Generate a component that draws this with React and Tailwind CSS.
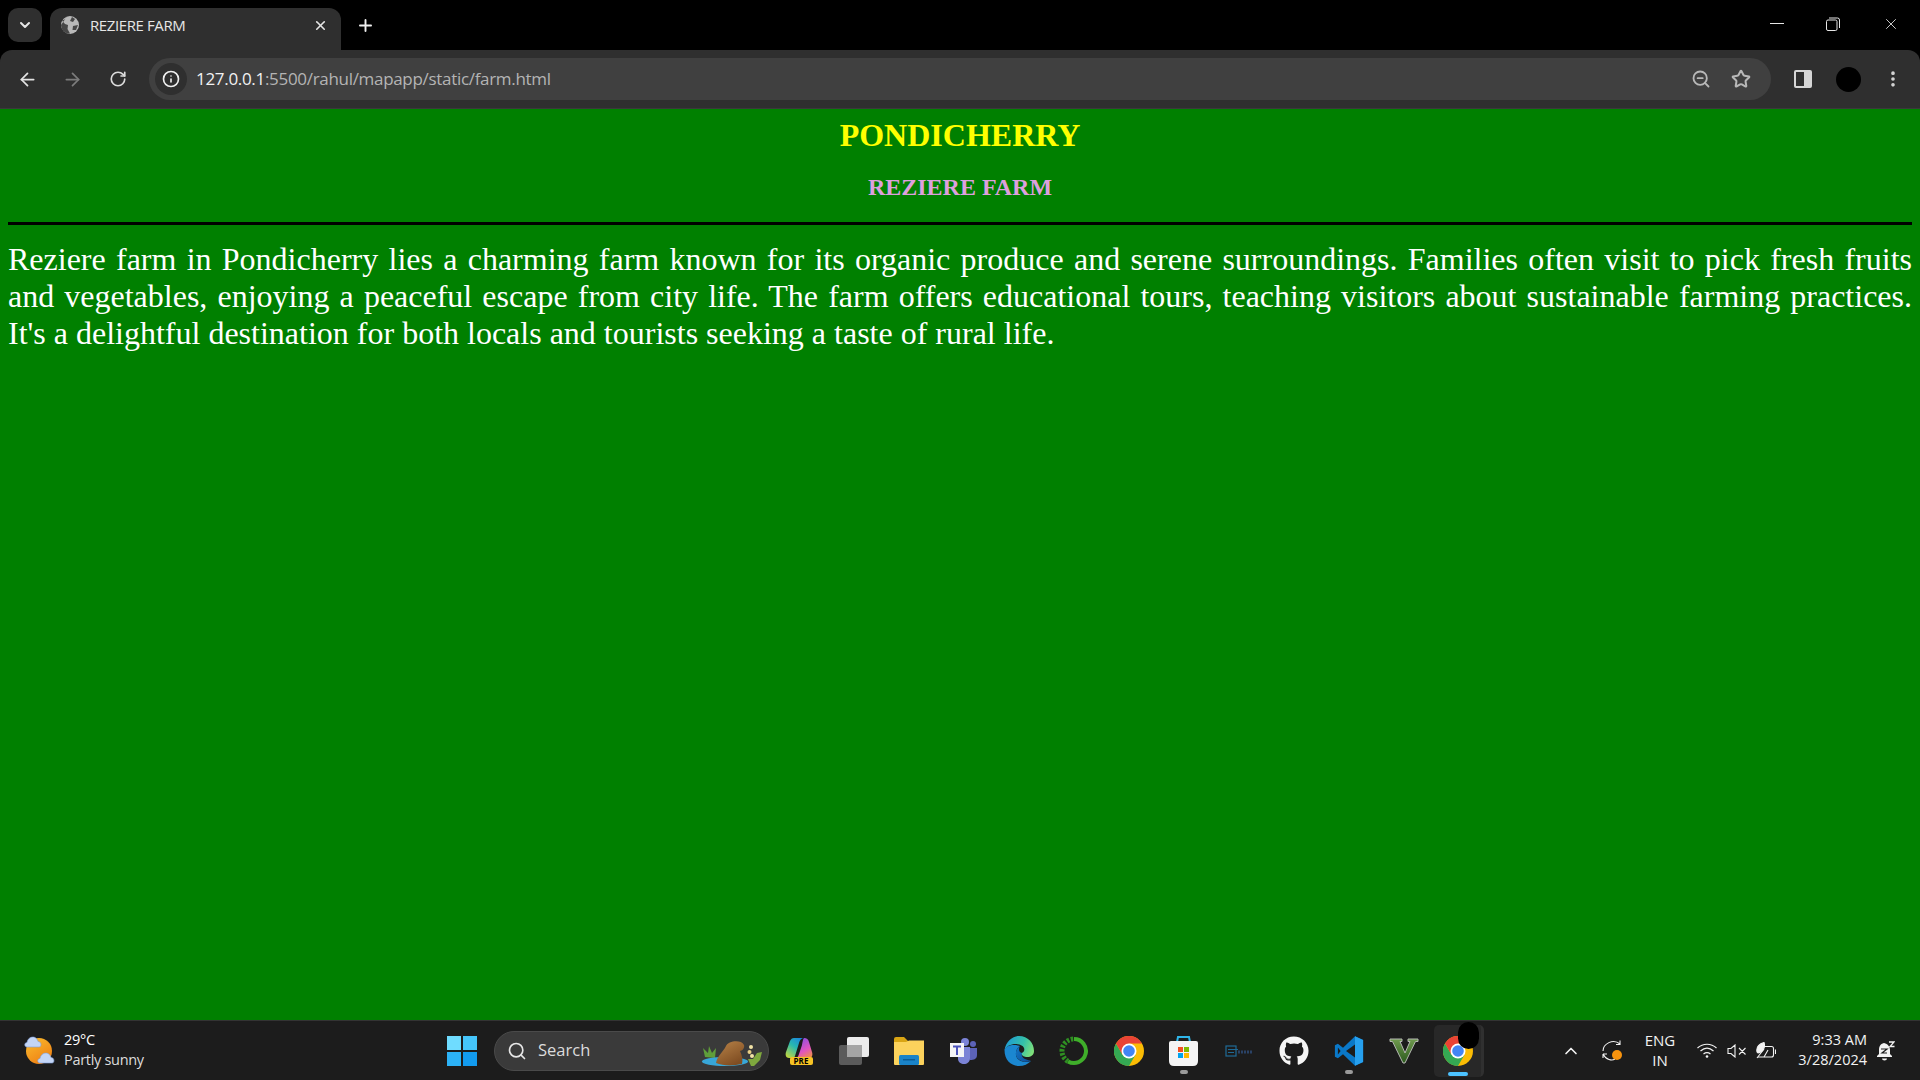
import React from "react";
import { ArrowLeft, ArrowRight, ChevronDown, ChevronUp, Info, MoreVertical, Plus, RotateCw, Search, Star, X, ZoomOut } from "lucide-react";
import { FaGithub } from "react-icons/fa";

const sans = "[font-family:'Open_Sans','Noto_Sans',sans-serif]";

const Globe = () => (
  <svg width="20" height="20" viewBox="0 0 20 20">
    <circle cx="10" cy="10" r="9" fill="#b9b9b9" />
    <path d="M7 1.5 C6 4 4 5 2 5.5 L5 9 L8 10 L7.5 14 L10 18.5 C8 19 4 18 2 14 L1 10 Z" fill="#333" opacity="0.85" />
    <path d="M12 2 L15 4 L13 7 L10 6 Z M13 11 L18 10 L16 15 L12.5 15 Z" fill="#333" opacity="0.85" />
  </svg>
);

const RestoreIcon = () => (
  <svg width="14" height="14" viewBox="0 0 14 14" fill="none" stroke="#e6e6e6" strokeWidth="1">
    <rect x="0.5" y="3" width="10.5" height="10.5" rx="1.5" />
    <path d="M3 1 H11.5 Q13.5 1 13.5 3 V11" />
  </svg>
);

const SidePanel = () => (
  <svg width="18" height="18" viewBox="0 0 18 18">
    <rect x="0" y="0" width="18" height="18" rx="2" fill="#d6d6d6" />
    <rect x="2" y="2" width="8" height="14" fill="#2f2f2f" />
  </svg>
);

const Cloud = ({ x, y }) => (
  <g transform={`translate(${x} ${y})`}>
    <path d="M3 11 C0 11 0 6.5 3 6.5 C3.5 3 6 1 9 1 C12 1 13.5 3.5 14 5.5 C17.5 5.5 18 11 15 11 Z" fill="#c3d5f6" stroke="#7f9fd8" strokeWidth="0.6" />
  </g>
);

const WeatherIcon = () => (
  <svg width="32" height="30" viewBox="0 0 32 30">
    <defs>
      <linearGradient id="sun" x1="0.2" y1="0" x2="0.8" y2="1">
        <stop offset="0" stopColor="#f9b92c" />
        <stop offset="1" stopColor="#ee7c12" />
      </linearGradient>
    </defs>
    <circle cx="15" cy="15" r="13" fill="url(#sun)" />
    <Cloud x={0} y={0} />
    <Cloud x={13} y={16} />
  </svg>
);

const WinLogo = () => (
  <svg width="30" height="30" viewBox="0 0 30 30">
    <rect x="0" y="0" width="14" height="14" fill="#6fdcff" />
    <rect x="16" y="0" width="14" height="14" fill="#45c6fb" />
    <rect x="0" y="16" width="14" height="14" fill="#2cb2f6" />
    <rect x="16" y="16" width="14" height="14" fill="#129bef" />
  </svg>
);

const Capybara = () => (
  <svg width="64" height="36" viewBox="0 0 64 36">
    <defs>
      <linearGradient id="capy" x1="0" y1="0" x2="0.6" y2="1">
        <stop offset="0" stopColor="#b98449" />
        <stop offset="1" stopColor="#7f4d22" />
      </linearGradient>
    </defs>
    <path d="M4 24 L2 15 L7 20 L8 13 L11 20 L15 15 L14 25 Z" fill="#5f9e3a" />
    <ellipse cx="24" cy="28.5" rx="23" ry="4.5" fill="#38a6d8" />
    <path d="M15 30 C16 23 22 19 25 13 C27 8 40 6 43 12 C44 15 41 18 39 18 C41 22 42 27 41 31 C32 33 22 33 15 30 Z" fill="url(#capy)" />
    <path d="M50 33 L47 26 H52 L56 20 L61 19 L59 27 L53 33 Z" fill="#7fa83e" />
    <circle cx="50" cy="14" r="2" fill="#f2e3a6" />
    <circle cx="48.5" cy="19" r="2" fill="#e9cf86" />
    <circle cx="51" cy="23" r="2" fill="#f2e3a6" />
  </svg>
);

const Copilot = () => (
  <div className="relative w-[28px] h-[28px]">
    <svg width="28" height="22" viewBox="0 0 28 22" className="block">
      <defs>
        <linearGradient id="cpL" x1="0.8" y1="0" x2="0.1" y2="1">
          <stop offset="0" stopColor="#1a84e0" />
          <stop offset="0.45" stopColor="#28b8b0" />
          <stop offset="1" stopColor="#c8d83a" />
        </linearGradient>
        <linearGradient id="cpR" x1="0.3" y1="0" x2="0.8" y2="1">
          <stop offset="0" stopColor="#8a4fe0" />
          <stop offset="0.6" stopColor="#e054c0" />
          <stop offset="1" stopColor="#f09048" />
        </linearGradient>
      </defs>
      <path d="M9 1 H20 C16 1 15 3 14 6 L10 19 C9.5 21 8 21 6 21 H4 C1 21 0 18 1 15 L5 4 C6 2 7 1 9 1 Z" fill="url(#cpL)" />
      <path d="M19 1 C22 1 23 2 24 5 L27 15 C28 18 27 21 24 21 H10 C12 21 13 20 14 17 L17 8 C17.5 5 18 2 19 1 Z" fill="url(#cpR)" />
    </svg>
    <span className={`absolute left-[5px] top-[20px] w-[23px] h-[8px] rounded-[2px] bg-[#f7c325] text-[8px] leading-[8px] font-bold text-black text-center ${sans}`}>PRE</span>
  </div>
);

const TaskView = () => (
  <svg width="30" height="28" viewBox="0 0 30 28">
    <rect x="0" y="8" width="23" height="20" rx="2" fill="#5b5b5b" />
    <rect x="8" y="0" width="22" height="20" rx="2" fill="#ececec" />
    <rect x="8" y="8" width="15" height="12" fill="#a5a5a5" />
  </svg>
);

const Folder = () => (
  <svg width="30" height="28" viewBox="0 0 30 28">
    <path d="M0 2 Q0 0 2 0 H10 L14 4 H30 V8 H0 Z" fill="#d9a514" />
    <path d="M0 5 L12 5 L15 3.5 H30 V27 Q30 28 29 28 H1 Q0 28 0 27 Z" fill="#fbd25c" />
    <rect x="5" y="18" width="20" height="10" rx="1.5" fill="#1a83c8" />
    <rect x="9" y="22" width="12" height="1.5" fill="#0b5c96" />
  </svg>
);

const Teams = () => (
  <svg width="28" height="26" viewBox="0 0 28 26">
    <circle cx="15" cy="4" r="4" fill="#7b83d6" />
    <circle cx="23" cy="6" r="3" fill="#5c63b8" />
    <path d="M10 9 H20 V20 C20 24 17 26 14 26 C11 26 8 24 8 21 V18 Z" fill="#7b83d6" />
    <path d="M20 10 H27 V17 C27 21 24 22 20 22 Z" fill="#5c63b8" />
    <rect x="0" y="5" width="14" height="14" fill="#f4f4f6" />
    <path d="M3 7.5 H11 V9.5 H8 V17 H6 V9.5 H3 Z" fill="#4b53bc" />
  </svg>
);

const Edge = () => (
  <svg width="30" height="30" viewBox="0 0 30 30">
    <defs>
      <linearGradient id="edgeTop" x1="0" y1="0.3" x2="1" y2="0.6">
        <stop offset="0" stopColor="#1d9ad6" />
        <stop offset="0.6" stopColor="#35c1a8" />
        <stop offset="1" stopColor="#7fe07a" />
      </linearGradient>
      <linearGradient id="edgeLow" x1="0" y1="0" x2="1" y2="1">
        <stop offset="0" stopColor="#1276c4" />
        <stop offset="1" stopColor="#0e4f9c" />
      </linearGradient>
    </defs>
    <path d="M0.5 14 C0.5 24 7 30 15 30 C20 30 24 28 27 25 C22 27 13 26 12 19 C11.5 14 14 11 16 10 C10 8 2 9 0.5 14 Z" fill="#1b87d0" />
    <path d="M16 10 C13 12 11.5 15 12 19 C13 25 21 27 27 25 C24 24 19 23 18 20 C17.5 18.5 18 17.5 19 17 C15 17 14 13 16 10 Z" fill="url(#edgeLow)" />
    <path d="M0.5 14 C2 5 9 0 15 0 C24 0 30 7 30 15 C30 19 27 21 23 21 C20 21 17 19.5 18 17 C21 15.5 21 12 18.5 10 C13 6 3 8 0.5 14 Z" fill="url(#edgeTop)" />
  </svg>
);

const RingApp = () => (
  <svg width="30" height="30" viewBox="0 0 30 30" fill="none">
    <path d="M15 3 A12 12 0 1 1 9 25.4" stroke="#3fae2a" strokeWidth="4" />
    <path d="M9 25.4 A12 12 0 0 1 15 3" stroke="#2f8f22" strokeWidth="5" strokeDasharray="2.5 1.5" />
  </svg>
);

const Chrome = () => (
  <svg width="30" height="30" viewBox="0 0 30 30">
    <circle cx="15" cy="15" r="15" fill="#fbbc04" />
    <path d="M2 7.5 A15 15 0 0 0 15 30 L21.5 18.75 H8.5 Z" fill="#34a853" />
    <path d="M2 7.5 A15 15 0 0 1 28 7.5 H15 L8.5 18.75 Z" fill="#ea4335" />
    <circle cx="15" cy="15" r="7.5" fill="#fff" />
    <circle cx="15" cy="15" r="5.8" fill="#4285f4" />
  </svg>
);

const Store = () => (
  <svg width="29" height="30" viewBox="0 0 29 30">
    <path d="M8 6 L9 1 H20 L21 6" fill="none" stroke="#2fb6ea" strokeWidth="2" />
    <path d="M2 5 H27 Q29 5 29 7 V25 Q29 30 24 30 H5 Q0 30 0 25 V7 Q0 5 2 5 Z" fill="#f4f4f4" />
    <rect x="9" y="11" width="5" height="5" fill="#f25022" />
    <rect x="15" y="11" width="5" height="5" fill="#7fba00" />
    <rect x="9" y="17" width="5" height="5" fill="#00a4ef" />
    <rect x="15" y="17" width="5" height="5" fill="#ffb900" />
  </svg>
);

const SmallApp = () => (
  <svg width="28" height="12" viewBox="0 0 28 12" fill="none">
    <rect x="1" y="1" width="10" height="10" stroke="#1f6a96" strokeWidth="1.2" />
    <path d="M3 4.5 H13 M3 7.5 H9" stroke="#1f6a96" strokeWidth="1" />
    <path d="M13 7 H27" stroke="#2a4266" strokeWidth="3" strokeDasharray="2 1" />
  </svg>
);

const VsCode = () => (
  <svg width="30" height="30" viewBox="0 0 100 100">
    <path fillRule="evenodd" d="M70 1 L30 39 L13 26 L3 31 V69 L13 74 L30 61 L70 99 L97 87 V13 Z M70 28 L40 50 L70 72 Z M13 38 L22 50 L13 62 Z" fill="#0a78c8" />
    <path fillRule="evenodd" d="M70 1 L97 13 V87 L70 99 Z" fill="#26a0ef" />
  </svg>
);

const GtaV = () => (
  <svg width="30" height="26" viewBox="0 0 30 26">
    <defs>
      <linearGradient id="gtaV" x1="0" y1="0" x2="0" y2="1">
        <stop offset="0" stopColor="#6f9a4e" />
        <stop offset="1" stopColor="#2c5a1e" />
      </linearGradient>
    </defs>
    <path d="M1 1 H13 V3.5 H11 L16 15 L21 3.5 H19 V1 H29 V3.5 H26.5 L16 25 H14 L3.5 3.5 H1 Z" fill="url(#gtaV)" stroke="#b5b8b2" strokeWidth="1" />
  </svg>
);

const Wifi = () => (
  <svg width="20" height="15" viewBox="0 0 20 15" fill="none" stroke="#f2f2f2" strokeWidth="1.2">
    <path d="M0.5 5 C6 0 14 0 19.5 5 M3.5 8 C7.5 4.5 12.5 4.5 16.5 8 M6.5 11 C8.5 9.5 11.5 9.5 13.5 11" />
    <circle cx="10" cy="13.5" r="1.3" fill="#f2f2f2" stroke="none" />
  </svg>
);

const Volume = () => (
  <svg width="20" height="14" viewBox="0 0 20 14" fill="none" stroke="#f2f2f2" strokeWidth="1.1">
    <path d="M1 4.5 H4 L8 1 V13 L4 9.5 H1 Z M12 4 L18.5 10.5 M18.5 4 L12 10.5" />
  </svg>
);

const Battery = () => (
  <svg width="20" height="17" viewBox="0 0 20 17" fill="none" stroke="#f2f2f2" strokeWidth="1.1">
    <path d="M8 4.5 H15.5 Q17.5 4.5 17.5 6.5 V13 Q17.5 15 15.5 15 H2" />
    <path d="M19.5 7.5 V12" />
    <path d="M1 10 C0 5 3 2 8 0.5 C9.5 5 7.5 10 2 11 Z" fill="#f2f2f2" />
    <path d="M1 16 L8 7 M8 15 L12 8" />
  </svg>
);

const SyncDot = () => (
  <div className="relative w-[20px] h-[21px]">
    <svg width="20" height="21" viewBox="0 0 20 21" fill="none" stroke="#f2f2f2" strokeWidth="1.1">
      <path d="M1 11 C1 4 11 -2 18 4 M18 0.5 V4.5 H14 M1 14 H5 M1 14 V18 M1 14 C4 20 10 21 13 19" />
    </svg>
    <span className="absolute right-0 bottom-[1px] w-[10px] h-[10px] rounded-full bg-[#f7930e]" />
  </div>
);

const SleepBell = () => (
  <svg width="18" height="20" viewBox="0 0 18 20">
    <path d="M7 2 C3 3 2 6 2 9 V13 L0 15 V16 H15 V15 L13 13 V9 C13 6 11 3 7 2 Z" fill="#f2f2f2" />
    <path d="M5 17.5 H10 A2.5 2 0 0 1 5 17.5 Z" fill="#f2f2f2" />
    <path d="M4 8 H10 L5 12 H10" fill="none" stroke="#1c1c1c" strokeWidth="1.2" />
    <path d="M12 1 H17 L13 5.5 H17.5" fill="none" stroke="#f2f2f2" strokeWidth="1.3" />
  </svg>
);

const taskIcons = [
  { id: "copilot", icon: <Copilot /> },
  { id: "taskview", icon: <TaskView /> },
  { id: "folder", icon: <Folder /> },
  { id: "teams", icon: <Teams /> },
  { id: "edge", icon: <Edge /> },
  { id: "ring", icon: <RingApp /> },
  { id: "chrome", icon: <Chrome /> },
  { id: "store", icon: <Store />, dot: true },
  { id: "app", icon: <SmallApp /> },
  { id: "github", icon: <FaGithub size={30} color="#f5f5f5" /> },
  { id: "vscode", icon: <VsCode />, dot: true },
  { id: "gta", icon: <GtaV /> },
];

const TaskIcon = ({ icon, dot }) => (
  <div className="relative w-[55px] h-[59px] flex items-center justify-center">
    {icon}
    {dot && <span className="absolute bottom-[6px] left-[24px] w-[8px] h-[4px] rounded-full bg-[#9a9a9a]" />}
  </div>
);

export default function App() {
  return (
    <div className={`h-[1080px] w-[1920px] overflow-hidden flex flex-col bg-[#008000] ${sans}`}>
      {/* tab strip */}
      <div className="h-[50px] shrink-0 bg-black flex items-start pt-[8px] pl-[8px] text-[#e8e8e8]">
        <div className="w-[34px] h-[34px] rounded-[10px] bg-[#2f2f2f] flex items-center justify-center">
          <ChevronDown size={16} strokeWidth={3} color="#e6e6e6" />
        </div>
        <div className="ml-[8px] w-[291px] h-[42px] rounded-t-[12px] bg-[#2f2f2f] flex items-center pl-[10px] pr-[13px] pb-[8px]">
          <Globe />
          <span className="ml-[10px] text-[15px] text-[#e6e6e6] tracking-[-0.4px]">REZIERE FARM</span>
          <X size={15} strokeWidth={2.6} color="#e6e6e6" className="ml-auto" />
        </div>
        <div className="ml-[15px] h-[34px] flex items-center">
          <Plus size={19} strokeWidth={2.4} color="#f0f0f0" />
        </div>
        <div className="ml-auto flex items-center h-[32px] pr-[20px]">
          <svg width="14" height="2" viewBox="0 0 14 2"><rect width="14" height="1" fill="#e6e6e6" /></svg>
          <div className="ml-[42px]"><RestoreIcon /></div>
          <div className="ml-[42px]"><X size={18} strokeWidth={1.1} color="#f0f0f0" /></div>
        </div>
      </div>

      {/* toolbar */}
      <div className="h-[59px] shrink-0 bg-black">
        <div className="h-full rounded-t-[12px] bg-[#2f2f2f] flex items-center pl-[17px] pr-[17px] border-b border-[#3a3a3a]">
          <ArrowLeft size={21} strokeWidth={2} color="#e2e2e2" />
          <ArrowRight size={21} strokeWidth={2} color="#7c7c7c" className="ml-[24px]" />
          <RotateCw size={18} strokeWidth={2.2} color="#dcdcdc" className="ml-[26px]" />
          <div className="ml-[22px] flex-1 h-[42px] rounded-full bg-[#404040] flex items-center pl-[6px] pr-[20px]">
            <div className="w-[32px] h-[32px] rounded-full bg-[#2f2f2f] flex items-center justify-center">
              <Info size={18} strokeWidth={2.2} color="#f0f0f0" />
            </div>
            <span className="ml-[9px] text-[17px] tracking-[-0.31px] text-[#f2f2f2]">
              127.0.0.1<span className="text-[#b4b4b4]">:5500/rahul/mapapp/static/farm.html</span>
            </span>
            <ZoomOut size={20} strokeWidth={2.2} color="#b8b8b8" className="ml-auto" />
            <Star size={20} strokeWidth={2.4} color="#b8b8b8" className="ml-[20px]" />
          </div>
          <div className="ml-[23px]"><SidePanel /></div>
          <div className="ml-[24px] w-[25px] h-[25px] rounded-full bg-black" />
          <MoreVertical size={20} strokeWidth={2.4} color="#d6d6d6" className="ml-[22px]" />
        </div>
      </div>

      {/* page */}
      <main className="flex-1 bg-[#008000] px-[8px] pt-[8px] [font-family:'Liberation_Serif','Times_New_Roman',serif]">
        <h1 className="text-[32px] leading-[37px] font-bold text-center text-[#ffff00]">PONDICHERRY</h1>
        <h2 className="mt-[20px] text-[24px] leading-[27px] font-bold text-center text-[#dda0dd]">REZIERE FARM</h2>
        <div className="mt-[21px] h-[3px] bg-black" />
        <p className="mt-[16px] text-[32px] leading-[37px] text-white text-justify">
          Reziere farm in Pondicherry lies a charming farm known for its organic produce and serene surroundings. Families often visit to pick fresh fruits and vegetables, enjoying a peaceful escape from city life. The farm offers educational tours, teaching visitors about sustainable farming practices. It's a delightful destination for both locals and tourists seeking a taste of rural life.
        </p>
      </main>

      {/* taskbar */}
      <footer className="h-[60px] shrink-0 bg-[#1c1c1c] border-t border-[#333] flex items-center text-[#f2f2f2]">
        <div className="w-[447px] pl-[24px] flex items-center">
          <WeatherIcon />
          <div className="ml-[8px] text-[14.5px] leading-[20px] tracking-[-0.3px] pb-[2px]">
            <div className="text-white">29°C</div>
            <div className="text-[#dcdcdc]">Partly sunny</div>
          </div>
        </div>
        <WinLogo />
        <div className="ml-[17px] w-[275px] h-[40px] rounded-full bg-[#3a3a3a] border border-[#4a4a4a] flex items-center pl-[12px] pr-[3px]">
          <Search size={20} strokeWidth={2} color="#e6e6e6" />
          <span className="ml-[11px] text-[16.5px] text-[#dcdcdc]">Search</span>
          <div className="ml-auto"><Capybara /></div>
        </div>
        <div className="ml-[2px] flex items-center">
          {taskIcons.map((t) => (
            <TaskIcon key={t.id} icon={t.icon} dot={t.dot} />
          ))}
          <div className="relative ml-[3px] w-[50px] h-[52px] rounded-[5px] bg-[#282828] border-r-[3px] border-[#303030] flex items-center justify-center">
            <Chrome />
            <span className="absolute right-[2px] top-[-3px] w-[21px] h-[27px] rounded-full bg-black" />
            <span className="absolute bottom-[1px] left-[14px] w-[20px] h-[4px] rounded-full bg-[#4cc2ff]" />
          </div>
        </div>
        <ChevronUp size={20} strokeWidth={2} color="#f2f2f2" className="ml-[77px]" />
        <div className="ml-[21px]"><SyncDot /></div>
        <div className="ml-[16px] w-[44px] text-center text-[15px] leading-[20px] pb-[2px]">
          <div>ENG</div>
          <div>IN</div>
        </div>
        <div className="ml-[15px]"><Wifi /></div>
        <div className="ml-[10px]"><Volume /></div>
        <div className="ml-[9px]"><Battery /></div>
        <div className="ml-[9px] w-[82px] text-right text-[14.5px] leading-[20px] pb-[2px]">
          <div>9:33 AM</div>
          <div>3/28/2024</div>
        </div>
        <div className="ml-[10px]"><SleepBell /></div>
      </footer>
    </div>
  );
}
